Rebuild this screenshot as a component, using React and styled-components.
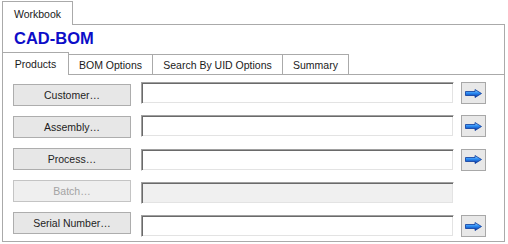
import React from "react";
import styled, { createGlobalStyle } from "styled-components";

const Global = createGlobalStyle`
  html, body { margin: 0; padding: 0; background: #fff; }
  body {
    font-family: "Liberation Sans", Arial, sans-serif;
    font-size: 10.5px;
    color: #000;
  }
  * { box-sizing: border-box; }
`;

const Frame = styled.div`
  padding: 1px 0 0 2px;
  width: 505px;
`;

const OuterTab = styled.div`
  position: relative;
  z-index: 1;
  width: 71px;
  height: 24px;
  margin-bottom: -1px;
  border: 1px solid #aaaaaa;
  border-bottom: none;
  background: #fff;
  display: flex;
  align-items: center;
  justify-content: center;
  color: #1a1a1a;
`;

const Body = styled.div`
  height: 218px;
  border: 1px solid #aaaaaa;
  display: flex;
  flex-direction: column;
`;

const Title = styled.div`
  height: 27px;
  line-height: 27px;
  padding-left: 11px;
  font-weight: bold;
  font-size: 16.5px;
  color: #0d0dc8;
`;

const TabStrip = styled.div`
  height: 22px;
  margin: 0 -1px;
  display: flex;
  align-items: flex-start;
`;

const Tab = styled.div`
  position: relative;
  z-index: ${(p) => (p.$active ? 2 : 1)};
  width: ${(p) => p.$w}px;
  height: ${(p) => (p.$active ? 23 : 20)}px;
  margin-top: ${(p) => (p.$active ? 0 : 2)}px;
  margin-left: ${(p) => (p.$first ? 0 : -1)}px;
  border: 1px solid #aaaaaa;
  border-bottom: none;
  background: #fff;
  display: flex;
  align-items: center;
  justify-content: center;
  color: #1a1a1a;
  white-space: nowrap;
`;

const Panel = styled.div`
  flex: 1;
  border-top: 1px solid #aaaaaa;
  display: flex;
  padding-left: 10px;
`;

const ButtonColumn = styled.div`
  display: flex;
  flex-direction: column;
  gap: 10px;
  padding-top: 9px;
  width: 118px;
`;

const LookupButton = styled.div`
  height: 22px;
  border: 1px solid ${(p) => (p.$disabled ? "#c4c4c4" : "#adadad")};
  background: ${(p) => (p.$disabled ? "#efefef" : "#e7e7e7")};
  color: ${(p) => (p.$disabled ? "#a3a3a3" : "#1e1e1e")};
  display: flex;
  align-items: center;
  justify-content: center;
`;

const FieldColumn = styled.div`
  display: flex;
  flex-direction: column;
  gap: 11.25px;
  padding-top: 7px;
  margin-left: 10px;
`;

const FieldRow = styled.div`
  display: flex;
  gap: 7px;
  height: 22px;
`;

const TextBox = styled.div`
  width: 313px;
  height: 22px;
  border: 1px solid;
  border-color: #a0a0a0 #ffffff #ffffff #a0a0a0;
  box-shadow: inset 1px 1px 0 #6a6a6a, inset -1px -1px 0 #e3e3e3;
  background: ${(p) => (p.$disabled ? "#f0f0f0" : "#ffffff")};
`;

const GoButton = styled.div`
  width: 25px;
  height: 22px;
  border: 1px solid #a8a8a8;
  background: #e8e8e8;
  display: flex;
  align-items: center;
  justify-content: center;
`;

const Arrow = () => (
  <svg width="17" height="9" viewBox="0 0 17 9">
    <defs>
      <linearGradient id="ag" x1="0" y1="0" x2="0" y2="1">
        <stop offset="0" stopColor="#9ad6ff" />
        <stop offset="0.45" stopColor="#2a8cf4" />
        <stop offset="1" stopColor="#0a2e9a" />
      </linearGradient>
    </defs>
    <path
      d="M0.5 2.5 H10 V0.5 L16.5 4.5 L10 8.5 V6.5 H0.5 Z"
      fill="url(#ag)"
      stroke="#0b3a9c"
      strokeWidth="0.8"
      strokeLinejoin="round"
    />
  </svg>
);

const rows = [
  { label: "Customer...", go: true },
  { label: "Assembly...", go: true },
  { label: "Process...", go: true },
  { label: "Batch...", disabled: true },
  { label: "Serial Number...", go: true },
];

const tabs = [
  { label: "Products", w: 67, active: true },
  { label: "BOM Options", w: 85 },
  { label: "Search By UID Options", w: 131 },
  { label: "Summary", w: 67 },
];

export default function App() {
  return (
    <>
      <Global />
      <Frame>
        <OuterTab>Workbook</OuterTab>
        <Body>
          <Title>CAD-BOM</Title>
          <TabStrip>
            {tabs.map((t, i) => (
              <Tab key={t.label} $w={t.w} $active={t.active} $first={i === 0}>
                {t.label}
              </Tab>
            ))}
          </TabStrip>
          <Panel>
            <ButtonColumn>
              {rows.map((r) => (
                <LookupButton key={r.label} $disabled={r.disabled}>
                  {r.label.replace("...", "\u2026")}
                </LookupButton>
              ))}
            </ButtonColumn>
            <FieldColumn>
              {rows.map((r) => (
                <FieldRow key={r.label}>
                  <TextBox $disabled={r.disabled} />
                  {r.go && (
                    <GoButton>
                      <Arrow />
                    </GoButton>
                  )}
                </FieldRow>
              ))}
            </FieldColumn>
          </Panel>
        </Body>
      </Frame>
    </>
  );
}
